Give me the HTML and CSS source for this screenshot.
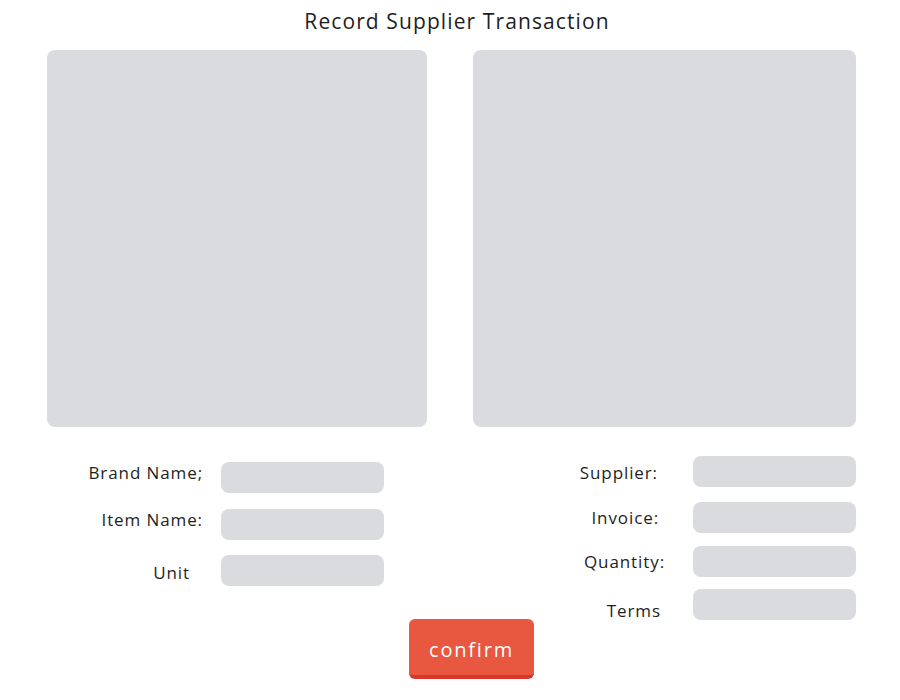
FILE: index.html
```html
<!DOCTYPE html>
<html>
<head>
<meta charset="utf-8">
<link rel="stylesheet" href="styles.css">
</head>
<body>
<div class="page">
  <h1 class="title">Record Supplier Transaction</h1>
  <div class="panels">
    <div class="panel panel-left"></div>
    <div class="panel panel-right"></div>
  </div>
  <div class="fields">
    <div class="group group-left">
      <div class="row"><label class="lbl up">Brand Name;</label><div class="input"></div></div>
      <div class="row r-item"><label class="lbl up">Item Name:</label><div class="input"></div></div>
      <div class="row r-unit"><label class="lbl down pad-unit">Unit</label><div class="input"></div></div>
    </div>
    <div class="group group-right">
      <div class="row"><label class="lbl nudge">Supplier:</label><div class="input"></div></div>
      <div class="row r-invoice"><label class="lbl pad-inv">Invoice:</label><div class="input"></div></div>
      <div class="row r-qty"><label class="lbl pad-qty">Quantity:</label><div class="input"></div></div>
      <div class="row r-terms"><label class="lbl terms">Terms</label><div class="input"></div></div>
    </div>
  </div>
  <div class="actions">
    <button class="confirm">confirm</button>
  </div>
</div>
</body>
</html>
```
FILE: styles.css
```css
html, body {
  margin: 0;
  padding: 0;
  background: #ffffff;
}
.page {
  width: 900px;
  height: 700px;
  font-family: "Open Sans", "Liberation Sans", sans-serif;
  color: #1e1e1e;
}
.title {
  margin: 0;
  padding-left: 14px;
  height: 42px;
  line-height: 42px;
  text-align: center;
  font-size: 21px;
  font-weight: 400;
  letter-spacing: 1.1px;
}
.panels {
  display: flex;
  gap: 46px;
  padding-left: 47px;
  margin-top: 8px;
}
.panel {
  height: 377px;
  background: #dadbdf;
  border-radius: 8px;
}
.panel-left { width: 380px; }
.panel-right { width: 383px; }

.fields {
  display: flex;
  align-items: flex-start;
  height: 192px;
}
.group {
  display: flex;
  flex-direction: column;
}
.row {
  display: flex;
  align-items: center;
  height: 31px;
}
.group-left {
  margin-left: 47px;
  margin-top: 35px;
}
.group-left .lbl { width: 156px; margin-right: 18px; }
.r-item { margin-top: 16px; }
.r-unit { margin-top: 15px; }

.group-right {
  margin-left: auto;
  margin-right: 44px;
  margin-top: 29px;
}
.group-right .lbl { width: 126px; margin-right: 33px; }
.r-invoice { margin-top: 15px; }
.r-qty { margin-top: 13px; }
.r-terms { margin-top: 12px; }

.lbl {
  display: block;
  font-size: 17px;
  line-height: 20px;
  text-align: right;
  color: #1e1e1e;
  letter-spacing: 0.9px;
  box-sizing: border-box;
}
.up { position: relative; top: -5px; }
.down { position: relative; top: 2px; }
.pad-unit { padding-right: 13px; }
.nudge { position: relative; top: 1px; padding-right: 2px; }
.pad-inv { padding-right: 1px; }
.group-right .pad-qty { width: 131px; margin-right: 28px; }
.terms { position: relative; top: 6px; }
.group-right .terms { width: 127px; margin-right: 32px; }
.input {
  width: 163px;
  height: 31px;
  background: #dadbdf;
  border-radius: 8px;
}
.actions {
  display: flex;
  justify-content: center;
  padding-left: 43px;
}
.confirm {
  width: 125px;
  height: 60px;
  border: none;
  border-bottom: 4px solid #d8362a;
  border-radius: 6px;
  background: #e8573f;
  color: #ffffff;
  font-family: "Open Sans", "Liberation Sans", sans-serif;
  font-size: 20px;
  letter-spacing: 1.8px;
  padding: 5px 0 0 0;
  line-height: 51px;
}
```
